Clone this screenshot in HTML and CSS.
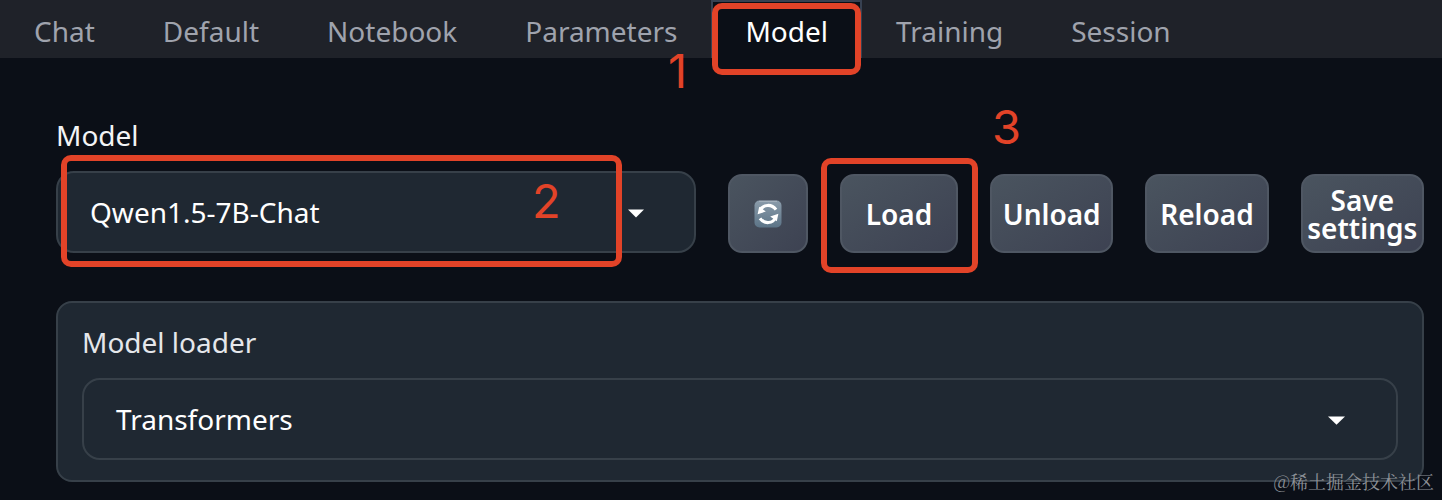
FILE: index.html
```
<!DOCTYPE html>
<html lang="en">
<head>
<meta charset="utf-8">
<title>Model</title>
<link rel="stylesheet" href="styles.css">
</head>
<body>
<nav class="tabs">
  <button class="tab">Chat</button>
  <button class="tab">Default</button>
  <button class="tab">Notebook</button>
  <button class="tab">Parameters</button>
  <button class="tab active">Model</button>
  <button class="tab">Training</button>
  <button class="tab">Session</button>
</nav>
<main class="content">
  <div class="label">Model</div>
  <div class="row">
    <div class="select model-select"><span>Qwen1.5-7B-Chat</span>
      <svg class="caret" width="16" height="9" viewBox="0 0 16 9"><path d="M0 0.5H16L8 8.5Z" fill="#fff"/></svg>
    </div>
    <button class="btn refresh" aria-label="Refresh">
      <svg width="28" height="28" viewBox="0 0 28 28">
        <defs><linearGradient id="g" x1="0" y1="0" x2="0" y2="1"><stop offset="0" stop-color="#8b9cab"/><stop offset="1" stop-color="#5c7487"/></linearGradient></defs>
        <rect x="0.5" y="0.5" width="27" height="27" rx="5" fill="url(#g)"/>
        <path d="M5 1.3H23" stroke="#a9b5c0" stroke-width="1"/>
        <g fill="none" stroke="#fff" stroke-width="3.200">
          <path d="M6.400 10.500C9 4.200 17.600 3.700 22 9.600"/>
          <path d="M21.600 17.500C19 23.800 10.400 24.300 6 18.400"/>
        </g>
        <path d="M3.600 14.200L5.200 6.800L11.800 11.600Z M24.400 13.800L22.800 21.200L16.200 16.400Z" fill="#fff"/>
      </svg>
    </button>
    <button class="btn load">Load</button>
    <button class="btn">Unload</button>
    <button class="btn">Reload</button>
    <button class="btn">Save settings</button>
  </div>
  <section class="panel">
    <div class="panel-label">Model loader</div>
    <div class="select loader-select"><span>Transformers</span>
      <svg class="caret" width="17" height="9" viewBox="0 0 17 9"><path d="M0 0.5H17L8.500 8.800Z" fill="#fff"/></svg>
    </div>
  </section>
</main>
<div class="mark mark-tab"></div>
<div class="mark mark-model"></div>
<div class="mark mark-load"></div>
<span class="num num-1">1</span>
<span class="num num-2">2</span>
<span class="num num-3">3</span>
<div class="watermark">@稀土掘金技术社区</div>
</body>
</html>
```
FILE: styles.css
```
* { box-sizing: border-box; }
body {
  margin: 0;
  width: 1442px;
  height: 500px;
  overflow: hidden;
  position: relative;
  background: #0b0f17;
  font-family: "Noto Sans", sans-serif;
  font-size: 28px;
  color: #f3f4f6;
}
button { font: inherit; margin: 0; }
.tabs {
  display: flex;
  height: 58px;
  background: #1f2229;
}
.tab {
  height: 58px;
  padding: 2px 32px 0;
  border: 2px solid transparent;
  border-bottom: 0;
  background: none;
  color: #9fa3ad;
  line-height: 38px;
  white-space: nowrap;
}
.tab.active {
  background: #0b0f17;
  border-color: #374151;
  color: #fff;
}
.content { padding: 58px 18px 0 56px; }
.label { height: 55px; line-height: 38px; }
.row {
  display: flex;
  align-items: flex-end;
  gap: 32px;
  height: 82px;
}
.select {
  display: flex;
  align-items: center;
  justify-content: space-between;
  height: 82px;
  border: 2px solid #374049;
  border-radius: 18px;
  background: #1f2832;
  color: #fff;
  padding: 0 50px 0 32px;
}
.caret { margin-top: 3px; }
.model-select { width: 640px; }
.btn {
  flex: 1 1 0;
  height: 79px;
  padding: 0;
  border: 2px solid #4f5763;
  border-radius: 14px;
  background: linear-gradient(to bottom right, #4a545f, #3d4252);
  color: #fff;
  font-weight: 600;
  line-height: 28px;
}
.refresh {
  flex: 0 0 80px;
  display: flex;
  align-items: center;
  justify-content: center;
}
.load { flex: 0 0 118px; }
.panel {
  margin-top: 48px;
  height: 181px;
  border: 2px solid #374049;
  border-radius: 16px;
  background: #1f2832;
  padding: 20px 24px 0;
}
.panel-label { height: 55px; line-height: 38px; color: #e5e7eb; }
.loader-select { padding-right: 51px; }
.mark { position: absolute; border: 6px solid #e24328; border-radius: 10px; }
.mark-tab { left: 712px; top: 3px; width: 149px; height: 72px; }
.mark-model { left: 61px; top: 155px; width: 561px; height: 112px; }
.mark-load { left: 821px; top: 158px; width: 157px; height: 115px; }
.num {
  position: absolute;
  font-family: Inter, sans-serif;
  font-size: 47px;
  font-weight: 400;
  line-height: 56px;
  color: #e24328;
}
.num-1 { left: 668px; top: 43px; }
.num-2 { left: 532px; top: 173px; }
.num-3 { left: 992px; top: 99px; }
.watermark {
  position: absolute;
  right: 8px;
  bottom: 7px;
  font-family: "Noto Serif CJK SC", "Liberation Serif", "Noto Sans CJK SC", serif;
  font-size: 18px;
  line-height: 24px;
  color: #8d9197;
}
```
